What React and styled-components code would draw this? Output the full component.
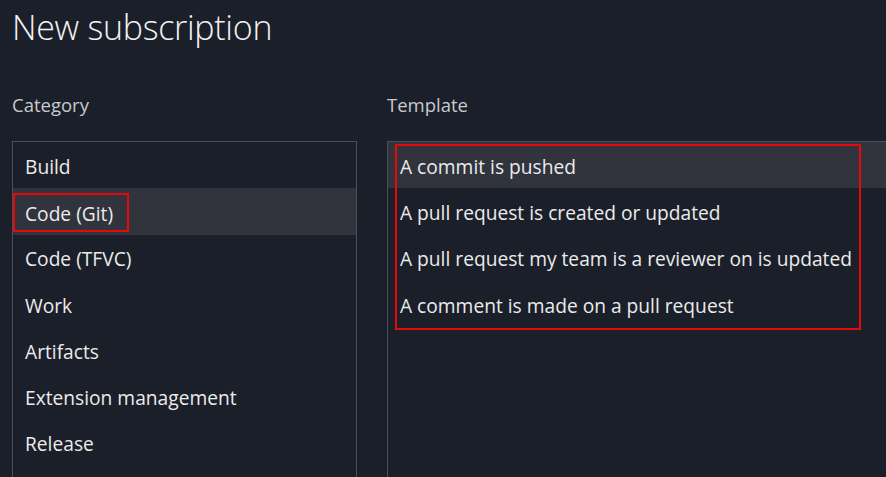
import React from 'react';
import styled, { createGlobalStyle } from 'styled-components';

const GlobalStyle = createGlobalStyle`
  html, body {
    margin: 0;
    padding: 0;
    background: #1b1f29;
    overflow: hidden;
  }
  body {
    font-family: "Open Sans", "Noto Sans", sans-serif;
    color: #e8e8e8;
  }
`;

const Page = styled('div')`
  width: 886px;
  height: 477px;
  padding: 0 0 0 12px;
  box-sizing: border-box;
  overflow: hidden;
`;

const Title = styled('h1')`
  margin: 0;
  padding-top: 4px;
  height: 58px;
  font-size: 34px;
  font-weight: 300;
  color: #f2f2f2;
  letter-spacing: -0.3px;
`;

const Columns = styled('div')`
  display: grid;
  grid-template-columns: 345px 1fr;
  column-gap: 30px;
  margin-top: 28px;
`;

const Column = styled('div')`
  display: flex;
  flex-direction: column;
`;

const Label = styled('div')`
  font-size: 18.5px;
  color: #c9cacd;
  height: 30px;
  line-height: 30px;
  margin-bottom: 21px;
`;

const List = styled('div')`
  position: relative;
  border: 1px solid #4b4f58;
  border-right: ${(p) => (p.$open ? 'none' : '1px solid #4b4f58')};
  height: 400px;
  box-sizing: border-box;
`;

const Item = styled('div')`
  height: 46.3px;
  box-sizing: border-box;
  padding-top: 2px;
  display: flex;
  align-items: center;
  padding-left: 12px;
  font-size: 19.2px;
  color: #ebebeb;
  background: ${(p) => (p.$selected ? '#31343d' : 'transparent')};
  white-space: nowrap;
`;

const Marked = styled('span')`
  outline: 2px solid #e8070b;
  margin-left: -10px;
  padding: 5px 14px 3px 10px;
`;

const Annotation = styled('div')`
  position: absolute;
  left: 7px;
  top: 2px;
  width: 466px;
  height: 186px;
  border: 2px solid #e8070b;
  box-sizing: border-box;
  pointer-events: none;
`;

const categories = [
  'Build',
  'Code (Git)',
  'Code (TFVC)',
  'Work',
  'Artifacts',
  'Extension management',
  'Release',
];

const templates = [
  'A commit is pushed',
  'A pull request is created or updated',
  'A pull request my team is a reviewer on is updated',
  'A comment is made on a pull request',
];

export default function App() {
  return (
    <Page>
      <GlobalStyle />
      <Title>New subscription</Title>
      <Columns>
        <Column>
          <Label>Category</Label>
          <List>
            {categories.map((c) => (
              <Item key={c} $selected={c === 'Code (Git)'}>
                {c === 'Code (Git)' ? <Marked>{c}</Marked> : c}
              </Item>
            ))}
          </List>
        </Column>
        <Column>
          <Label>Template</Label>
          <List $open>
            {templates.map((t, i) => (
              <Item key={t} $selected={i === 0}>
                {t}
              </Item>
            ))}
            <Annotation />
          </List>
        </Column>
      </Columns>
    </Page>
  );
}
